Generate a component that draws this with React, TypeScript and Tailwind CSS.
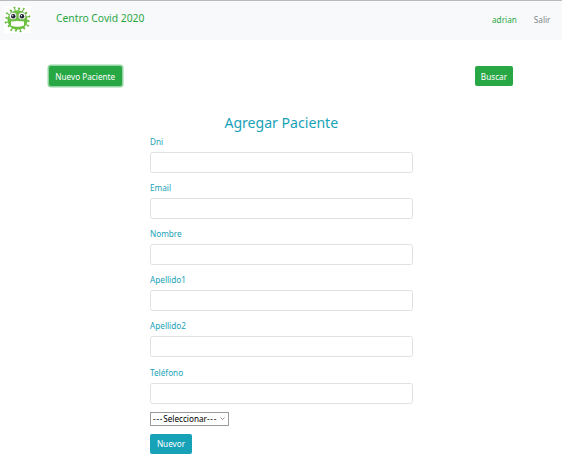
const fields = ['Dni', 'Email', 'Nombre', 'Apellido1', 'Apellido2', 'Teléfono'];

const spikes = Array.from({ length: 16 }, (_, i) => i * (360 / 16) + 8);

function VirusLogo() {
  return (
    <svg className="block h-[27px] w-[27px] bg-white" viewBox="0 0 54 54" aria-hidden="true">
      <g stroke="#62b73b" fill="#62b73b">
        {spikes.map((angle, i) => (
          <g key={angle} transform={`rotate(${angle} 27 27)`}>
            <path d="M27 14V3" strokeWidth="2" />
            <circle cx="27" cy={i % 2 ? 2.5 : 5} r="1.5" />
          </g>
        ))}
      </g>
      <ellipse cx="27" cy="28" rx="20" ry="19.5" fill="#6cc23f" />
      <circle cx="18" cy="20" r="7.6" fill="#fff" stroke="#4c8a36" />
      <circle cx="36" cy="20" r="7.6" fill="#fff" stroke="#4c8a36" />
      <circle cx="18.5" cy="20.5" r="4.4" fill="#18222b" />
      <circle cx="36" cy="20.5" r="4.4" fill="#18222b" />
      <circle cx="17.5" cy="19.5" r="1.4" fill="#fff" />
      <circle cx="35" cy="19.5" r="1.4" fill="#fff" />
      <path d="M14 31q13-2 26 0v8q-13 5-26 0z" fill="#fff" />
    </svg>
  );
}

export default function App() {
  return (
    <div className="h-[461px] w-[562px] overflow-hidden bg-white font-['Noto_Sans','Open_Sans',sans-serif] text-[8.2px] leading-[12px] text-[#17a2b8]">
      <header className="flex h-10 items-start border-t border-[#b9babb] bg-[#f8f9fa] pl-[3.5px] pt-[5px]">
        <VirusLogo />
        <span className="ml-[25.5px] mt-[4px] text-[10.3px] leading-4 text-[#28a745]">Centro Covid 2020</span>
        <nav className="ml-auto mr-[11.5px] mt-2 flex gap-[17px]">
          <a className="text-[#28a745]">adrian</a>
          <a className="text-[#7f858a]">Salir</a>
        </nav>
      </header>

      <div className="flex justify-between pl-[49px] pr-[48.8px] pt-[26px]">
        <button className="h-5 w-[72.5px] whitespace-nowrap rounded-[2px] bg-[#28a745] leading-[21px] text-white ring-[1.5px] ring-[#94d3a2]">
          Nuevo Paciente
        </button>
        <button className="h-5 w-[38.5px] rounded-[2px] bg-[#28a745] leading-[21px] text-white">Buscar</button>
      </div>

      <form className="ml-[150px] mt-[25.6px] w-[262.5px]">
        <h1 className="mb-[3px] h-5 text-center text-[14.1px] leading-[21px]">Agregar Paciente</h1>
        {fields.map((field) => (
          <label key={field} className="block h-[46.2px]">
            <span className="block h-[17px] leading-[13px]">{field}</span>
            <input className="block h-[21px] w-full rounded-[2.5px] border border-[#dfe2e5] bg-white px-1.5 outline-none" />
          </label>
        ))}
        <div className="flex h-[14px] w-[78.5px] items-center justify-between whitespace-nowrap border border-[#9b9b9b] bg-white pl-[2px] pr-[3px] text-black">
          <span>
            <span className="tracking-[0.75px]">---</span>Seleccionar<span className="tracking-[0.75px]">---</span>
          </span>
          <svg className="h-[3px] w-[5px]" viewBox="0 0 5 3" fill="none" stroke="#777" strokeWidth=".8">
            <path d="M.5.5l2 2 2-2" />
          </svg>
        </div>
        <button className="mt-[8px] block h-5 w-[42px] rounded-[2px] bg-[#17a2b8] leading-5 text-white">Nuevor</button>
      </form>
    </div>
  );
}
